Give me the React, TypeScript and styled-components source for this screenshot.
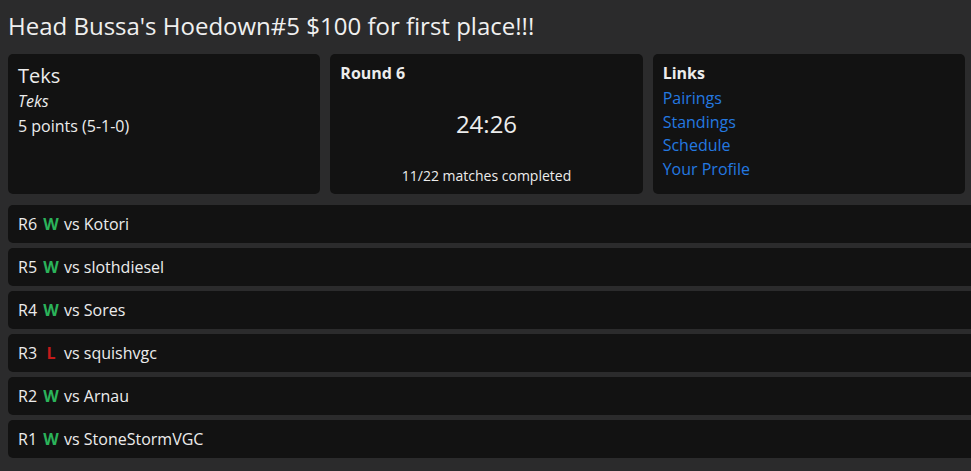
import React, { FC } from 'react';
import styled, { createGlobalStyle } from 'styled-components';

const GlobalStyle = createGlobalStyle`
  html, body {
    margin: 0;
    padding: 0;
    background-color: #2b2b2c;
    overflow: hidden;
  }
  body {
    font-family: "Open Sans", "Noto Sans", sans-serif;
    color: #ececec;
  }
`;

const Page = styled.div`
  padding: 8px 6px 8px 8px;
  width: 957px;
`;

const Title = styled.h1`
  margin: 0 0 10px;
  font-size: 24px;
  font-weight: 400;
  line-height: 36px;
  color: #f0f0f0;
`;

const Cards = styled.div`
  display: grid;
  grid-template-columns: repeat(3, 1fr);
  gap: 10px;
  margin-bottom: 11px;
`;

const Card = styled.div`
  background-color: #121212;
  border-radius: 5px;
  height: 140px;
  box-sizing: border-box;
  padding: 8px 10px;
  display: flex;
  flex-direction: column;
  font-size: 16px;
  line-height: 25px;
`;

const Name = styled.div`
  font-size: 20px;
  line-height: 27px;
`;

const Sub = styled.div`
  font-style: italic;
`;

const CardHead = styled.div`
  font-weight: 700;
  line-height: 22px;
  margin-bottom: 3px;
`;

const Clock = styled.div`
  flex: 1;
  display: flex;
  align-items: center;
  justify-content: center;
  font-size: 24px;
  padding-bottom: 6px;
`;

const Progress = styled.div`
  text-align: center;
  font-size: 14px;
  line-height: 20px;
`;

const LinkItem = styled.a`
  color: #2479e0;
  text-decoration: none;
  line-height: 23.5px;
`;

const Rows = styled.div`
  display: flex;
  flex-direction: column;
  gap: 5px;
  width: 1000px;
`;

const Row = styled.div`
  background-color: #121212;
  border-radius: 5px;
  height: 38px;
  display: flex;
  align-items: center;
  padding: 0 10px;
  font-size: 16px;
`;

const Result = styled.span<{ win: boolean }>`
  display: inline-block;
  width: 16px;
  margin: 0 5px 0 6px;
  text-align: center;
  font-weight: 700;
  color: ${({ win }) => (win ? '#2bb35a' : '#c41a1a')};
`;

const matches = [
  { round: 6, win: true, opp: 'Kotori' },
  { round: 5, win: true, opp: 'slothdiesel' },
  { round: 4, win: true, opp: 'Sores' },
  { round: 3, win: false, opp: 'squishvgc' },
  { round: 2, win: true, opp: 'Arnau' },
  { round: 1, win: true, opp: 'StoneStormVGC' },
];

const App: FC = () => {
  return (
    <>
      <GlobalStyle />
      <Page>
        <Title>Head Bussa's Hoedown#5 $100 for first place!!!</Title>
        <Cards>
          <Card>
            <Name>Teks</Name>
            <Sub>Teks</Sub>
            <div>5 points (5-1-0)</div>
          </Card>
          <Card>
            <CardHead>Round 6</CardHead>
            <Clock>24:26</Clock>
            <Progress>11/22 matches completed</Progress>
          </Card>
          <Card>
            <CardHead>Links</CardHead>
            <LinkItem href="#">Pairings</LinkItem>
            <LinkItem href="#">Standings</LinkItem>
            <LinkItem href="#">Schedule</LinkItem>
            <LinkItem href="#">Your Profile</LinkItem>
          </Card>
        </Cards>
        <Rows>
          {matches.map((m) => (
            <Row key={m.round}>
              R{m.round}
              <Result win={m.win}>{m.win ? 'W' : 'L'}</Result>
              vs {m.opp}
            </Row>
          ))}
        </Rows>
      </Page>
    </>
  );
};

export default App;
